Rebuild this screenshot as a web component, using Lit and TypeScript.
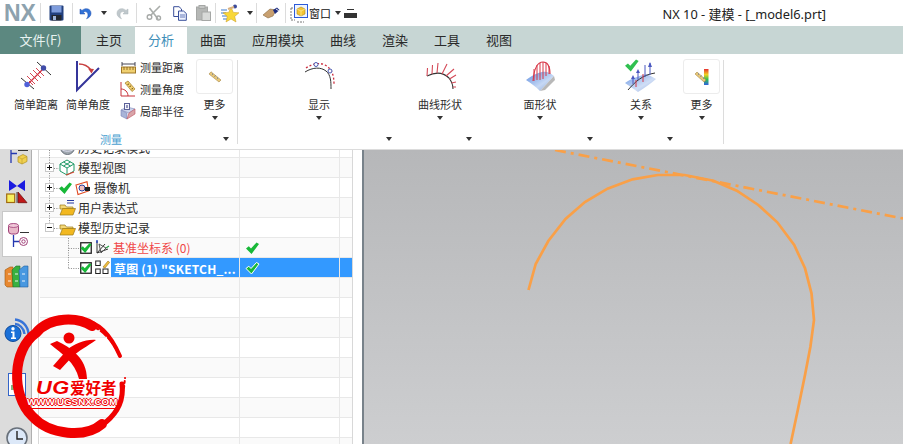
import { LitElement, html, css, svg, nothing } from "lit";
import { customElement } from "lit/decorators.js";

const ico = (w: number, h: number, body: unknown, vb?: string) => html`<svg width=${w} height=${h} viewBox=${vb ?? `0 0 ${w} ${h}`}>${body}</svg>`;

const checkShape = (fill: string, halo = false) => svg`
  <path d="M0 6.5 L2.8 4.2 L5 6.5 L10.5 0.5 L13 2 L5.5 12 Z" fill=${fill} stroke=${halo ? "#fff" : "none"} stroke-width=${halo ? 1 : 0}/>`;

const save = ico(15, 16, svg`
  <rect x=".5" y=".5" width="14" height="15" rx="1" fill="#22407e"/>
  <rect x="2.5" y="1" width="10" height="6.5" fill="#7e9cdc"/>
  <rect x="2.5" y="10" width="10" height="5.5" fill="#23272e"/>
  <rect x="4" y="11" width="3" height="4" fill="#9fb4d8"/>`);
const undo = (c: string, c2: string) => ico(14, 14, svg`
  <path d="M2 3 L2 8 L7 8 L5.3 6.2 C7.5 4.8 10 6 10 9 C10 10.5 9.5 11.6 8.5 12.8 C11.5 11.6 13 9.6 13 7.2 C13 3 8 1 4 4.4 Z" fill=${c} stroke=${c2} stroke-width=".5"/>`);
const redo = (c: string) => html`<span class="flip">${undo(c, "#aab4b8")}</span>`;
const cut = ico(15, 16, svg`
  <path d="M14 1 L5 10 M12 14 L3.5 3" stroke="#a9adaa" stroke-width="1.6" fill="none"/>
  <circle cx="3.5" cy="12" r="2.3" fill="none" stroke="#a7aaa8" stroke-width="1.4"/>
  <circle cx="12.5" cy="13" r="2" fill="none" stroke="#a7aaa8" stroke-width="1.4"/>`);
const copy = ico(14, 15, svg`
  <path d="M.7.7 H6 L8.5 3 V10.5 H.7 Z" fill="#fff" stroke="#3a4f9a"/>
  <path d="M5.5 5 H10.5 L13.3 7.5 V14.3 H5.5 Z" fill="#eef3ff" stroke="#3a4f9a"/>
  <path d="M7 9 H12 M7 11 H12" stroke="#6478b8"/>`);
const paste = ico(15, 16, svg`
  <rect x=".5" y="2" width="11" height="13" fill="#b5b7b5" stroke="#a5a7a5"/>
  <rect x="3" y=".5" width="6" height="3" fill="#c4c6c4" stroke="#a5a7a5"/>
  <rect x="6" y="7" width="8.5" height="8.5" fill="#d8dad8" stroke="#a5a7a5"/>`);
const star = ico(18, 18, svg`
  <path d="M0 6 H6 M0 9 H5 M1 12 H6 M2 15 H6" stroke="#3a7ad0" stroke-width="1.2"/>
  <path d="M10 3 L12.3 8.4 L18 8.8 L13.7 12.4 L15 18 L10 15 L5 18 L6.3 12.4 L2 8.8 L7.7 8.4 Z" fill="#f8d738" stroke="#c89a20" stroke-width=".5"/>
  <circle cx="14" cy="2.5" r="2" fill="#3b4a9a"/>
  <path d="M7 5 L13 3" stroke="#d8b080" stroke-width="2"/>`);
const eraser = ico(18, 12, svg`
  <path d="M1 8 L8 2 L14 3 L11 9 L6 11 Z" fill="#c8a070" stroke="#8a6a40" stroke-width=".6"/>
  <path d="M11 3 L15 0.5 L17.5 3 L13 7 Z" fill="#1f2f80"/>
  <path d="M14 2 L17 4" stroke="#e8e8f0"/>`);
const windowIcon = ico(18, 19, svg`
  <path d="M1 4 H4 M1 4 V16 H5 M7 18 H14" stroke="#777" stroke-dasharray="2 1" fill="none"/>
  <rect x="4.5" y=".5" width="13" height="13" fill="#eef4ff" stroke="#2b5ad8"/>
  <path d="M7 5 L11 3 L15 5 V10 L11 12 L7 10 Z" fill="#f4c430" stroke="#b08a18" stroke-width=".6"/>
  <path d="M7 5 L11 7 L15 5 M11 7 V12" stroke="#fff3b0" stroke-width=".6" fill="none"/>`);
const caret = html`<span class="caret"></span>`;
const moreMenu = html`<span class="menu-lines"><span></span>${caret}</span>`;

const simpleDist = ico(34, 32, svg`
  <path d="M2 18 L15 29 M18 2 L32 15" stroke="#333" stroke-width="1" fill="none"/>
  <path d="M8 25 L24 9" stroke="#d23040" stroke-width="1.2"/>
  <path d="M8 16 L16 24 M11 13 L19 21 M14 10 L22 18 M17 8 L25 16 M10 21 L14 25" stroke="#d23040" stroke-width=".9"/>
  <circle cx="8" cy="24.5" r="2.7" fill="#5060d8"/><circle cx="24.5" cy="8" r="2.7" fill="#404ca8"/>`);
const simpleAngle = ico(26, 32, svg`
  <path d="M2 1 V30 L24 8" fill="none" stroke="#35359a" stroke-width="2"/>
  <path d="M4 4 C9 4 13 6 16 10" fill="none" stroke="#c84040" stroke-width="1.3"/>
  <path d="M13 8.5 L19 9 L16.5 13.5 Z" fill="#c84040"/>`);
const measDist = ico(15, 13, svg`
  <path d="M1 1 V5 M14 1 V5 M1 3 H14" stroke="#334" stroke-width=".9"/>
  <rect x=".5" y="6" width="14" height="6" fill="#f0d070" stroke="#a07828"/>
  <path d="M3 6 V9 M6 6 V9 M9 6 V9 M12 6 V9" stroke="#805818" stroke-width=".8"/>`);
const measAngle = ico(16, 16, svg`
  <path d="M1 1 V15 H15 M1 8 C5 8 8 11 8 15" fill="none" stroke="#c83038" stroke-width="1"/>
  <path d="M5 2 L8 0 L15 8 L12 10.5 Z" fill="#f0d070" stroke="#a07828" stroke-width=".7"/>
  <path d="M7.5 3.5 L9 3 M9.5 5.5 L11 5 M11.5 8 L13 7.5" stroke="#705018"/>`);
const radius = ico(16, 17, svg`
  <path d="M1 7 L7 4 L15 6 L9 10 Z" fill="#ccd4ec" stroke="#7a84b8" stroke-width=".6"/>
  <path d="M1 7 V13 L7 16 V10 Z" fill="#a8b4d8" stroke="#7a84b8" stroke-width=".6"/>
  <path d="M7 16 L9 10 L15 6 V11 Z" fill="#d8a4a8" stroke="#c05060" stroke-width=".6"/>
  <rect x="4.5" y=".5" width="5" height="6" fill="#f4f4fa" stroke="#5a6098"/>
  <path d="M7 2 V5" stroke="#303880"/>`);
const rulerSm = ico(14, 12, svg`
  <path d="M1 3 L3 .8 L13 9 L11 11 Z" fill="#e8c878" stroke="#a88848" stroke-width=".6"/>
  <path d="M4 3.5 L5 2.7 M6.5 5.5 L7.5 4.7 M9 7.5 L10 6.7" stroke="#5a70a0"/>`);
const rulerRain = ico(14, 16, svg`
  <defs><linearGradient id="rb" x1="0" y1="0" x2="0" y2="1"><stop offset="0" stop-color="#e83030"/><stop offset=".35" stop-color="#f0d020"/><stop offset=".65" stop-color="#30c050"/><stop offset="1" stop-color="#3060e0"/></linearGradient></defs>
  <rect x="9" y="0" width="4.5" height="16" fill="url(#rb)"/>
  <path d="M0 5 L2 3 L11 11 L9 13 Z" fill="#e8c878" stroke="#a88848" stroke-width=".6"/>
  <path d="M3 5.5 L4 4.7 M5.5 7.5 L6.5 6.7 M8 9.5 L9 8.7" stroke="#5a70a0"/>`);
const display = ico(32, 28, svg`
  <path d="M2 10 C10 5 18 5 23 9 C28 13 28 20 28 27" fill="none" stroke="#333" stroke-width="1"/>
  <path d="M3 6 C9 2 16 0 22 3 C28 6 31 12 31 22" fill="none" stroke="#cc3040" stroke-width="1.3" stroke-dasharray="2 2"/>
  <circle cx="13" cy="2.5" r="2" fill="#fff" stroke="#4a58b0"/>
  <circle cx="27" cy="9" r="2" fill="#fff" stroke="#4a58b0"/>`);
const curveShape = ico(30, 28, svg`
  <path d="M2 14 C10 10 18 10 24 16 C27 20 28 23 28 27" fill="none" stroke="#333" stroke-width="1.1"/>
  <path d="M2 14 L2.5 6 M7 12 L7.5 3 M12 11 L13 1 M17 12 L22 2 M21 14 L29 7 M24.5 17 L31 13 M26.5 21 L31 20 M28 25 L31 25" stroke="#d44a58" stroke-width="1.1"/>`);
const surfaceShape = ico(30, 30, svg`
  <defs><linearGradient id="sf" x1="0" y1="0" x2="1" y2="1"><stop offset="0" stop-color="#5e8ee0"/><stop offset=".6" stop-color="#c6d8f4"/><stop offset="1" stop-color="#88a4d8"/></linearGradient></defs>
  <path d="M1 19 C8 14 12 12 17 11 C22 10 25 12 29 15 L15 30 C11 26 6 22 1 19 Z" fill="url(#sf)"/>
  <path d="M15 30 L29 15 L30 19 L20 29 Z" fill="#b8b8b8"/>
  <path d="M8 20 C9 8 12 1 18 1 C24 1 25 7 25 13" fill="none" stroke="#d83848" stroke-width="1.1"/>
  <path d="M9 8 V20 M12 4 V19 M15 2 V19 M18 1 V18 M21 2 V15 M24 5 V13" stroke="#d83848" stroke-width="1"/>`);
const relation = ico(32, 32, svg`
  <defs><linearGradient id="sr" x1="0" y1="0" x2="1" y2="1"><stop offset="0" stop-color="#6e9ae4"/><stop offset=".6" stop-color="#d0def6"/><stop offset="1" stop-color="#90aadd"/></linearGradient></defs>
  <path d="M0 23 C7 18 14 16 22 14 L31 19 C26 23 20 28 13 32 Z" fill="url(#sr)"/>
  <path d="M3 30 C10 22 17 15 30 13" fill="none" stroke="#333" stroke-width="1"/>
  <path d="M8 24 V17 M13 20 V11 M20 17 V5 M25 15 V3" stroke="#4a58c0" stroke-width="1"/>
  <path d="M6 19 L8 15 L10 19 Z M11 13 L13 9 L15 13 Z M23 7 L25 2 L27 7 Z" fill="#4a58c0"/>
  <path d="M11 27 V20 M18 22 V14" stroke="#d83848" stroke-width="1"/>
  <g transform="translate(0,-1) scale(1.05)">${checkShape("#30c050")}</g>`);

const dbIcon = ico(24, 26, svg`
  <rect x="2.5" y="1" width="10" height="10" rx="3" fill="#e8b8c8" stroke="#a04078"/>
  <ellipse cx="7.5" cy="2.5" rx="5" ry="2" fill="#f0c8d8" stroke="#a04078" stroke-width=".8"/>
  <path d="M14 9.5 H23" stroke="#333"/>
  <path d="M7.5 12 V24 M7.5 18.5 H13" stroke="#2438b0" stroke-width="1.3"/>
  <circle cx="17.5" cy="18.5" r="4" fill="#fff" stroke="#a04078"/>
  <circle cx="17.5" cy="18.5" r="1.7" fill="none" stroke="#a04078"/>`);
const tabTop = ico(24, 16, svg`
  <path d="M6 0 V13 M6 3.5 H12" stroke="#2438b0" stroke-width="1.3"/>
  <path d="M13 .5 H23" stroke="#333"/>
  <path d="M13 7 L18 4.5 L22 6.5 V11.5 L17 14 L13 12 Z" fill="#f0d050" stroke="#b09020" stroke-width=".7"/>
  <path d="M13 7 L17 9 L22 6.5 M17 9 V14" stroke="#b09020" stroke-width=".5" fill="none"/>`);
const constraints = ico(22, 24, svg`
  <path d="M3 0 L11 6 L19 0 V11 L11 6 L3 11 Z" fill="#1a1ae0"/>
  <rect x=".7" y="14" width="8" height="8.5" fill="#f8f060" stroke="#a06a10" stroke-width="1.2"/>
  <path d="M12 12 L21 22.7 H12 Z" fill="#c01818" stroke="#701010" stroke-width=".8"/>
  <path d="M11 12 V23" stroke="#444"/>`);
const books = ico(24, 23, svg`
  <path d="M0 5 L5 2 H8 V22 H2 L0 20 Z" fill="#e88830" stroke="#a05a10" stroke-width=".6"/>
  <path d="M7 5 L11 1 H15 V22 H8 Z" fill="#38b040" stroke="#207028" stroke-width=".6"/>
  <path d="M14 5 L19 1 H23 V22 H15 Z" fill="#4898e0" stroke="#2060a0" stroke-width=".6"/>
  <path d="M3 9 H6 M3 16 H6 M10 9 H13 M10 16 H13 M17 9 H20 M17 16 H20" stroke="#fff" stroke-width=".9"/>`);
const info = ico(26, 25, svg`
  <path d="M11 1.5 C18 2 24 8 24.5 16 M11 6 C15 6 20 10 20.5 16" stroke="#3874d8" stroke-width="2.4" fill="none"/>
  <circle cx="9" cy="15.5" r="8" fill="#1a70d8" stroke="#104a9a"/>
  <circle cx="9" cy="10.8" r="1.7" fill="#fff"/>
  <path d="M7 13.5 H10.5 V19.5 H12 V21 H7 V19.5 H8.5 V15 H7 Z" fill="#fff"/>`);
const blueBox = ico(18, 23, svg`
  <rect x=".5" y=".5" width="17" height="22" fill="#fff" stroke="#3464c8"/>
  <path d="M3 17 V12 H6 V17 Z" fill="#80b880"/>`);
const clock = ico(22, 22, svg`
  <circle cx="11" cy="11" r="10" fill="#dce8f8" stroke="#68707a" stroke-width="1.6"/>
  <path d="M11 4 V12 H17" fill="none" stroke="#222" stroke-width="1.4"/>`);

const tree3d = ico(16, 17, svg`
  <path d="M8 1 L15 5 V12 L8 16 L1 12 V5 Z M1 5 L8 9 L15 5 M8 9 V16 M4.5 3 L11.5 7 M11.5 3 L4.5 7" fill="#fff" stroke="#1f9a68" stroke-width="1"/>
  <path d="M7 16 L15 13" stroke="#d84030" stroke-width="1.2"/>`);
const camera = ico(15, 14, svg`
  <path d="M1 4 L12 .8 L13.5 10 L3 13.5 Z" fill="#fff" stroke="#e04820" stroke-width="1.1"/>
  <circle cx="7" cy="7" r="3" fill="#f0c0c0" stroke="#2a40a0"/>
  <rect x="10" y="6" width="5" height="4" fill="#222"/>`);
const folder = (withLines: boolean) => ico(17, 17, svg`
  ${withLines ? svg`<path d="M8 1.5 H15 M8 4 H15" stroke="#2438a0" stroke-width="1"/>` : nothing}
  <path d="M1 6 H6 L7.5 8 H14 V10 H1 Z" fill="#f4d878" stroke="#9a7818" stroke-width=".7"/>
  <path d="M1 16 L3.5 9.5 H16.5 L14 16 Z" fill="#f2b820" stroke="#9a7818" stroke-width=".7"/>`);
const globe = ico(15, 15, svg`<circle cx="7.5" cy="7.5" r="7" fill="#a0a8b0" stroke="#68707a"/><path d="M1 9 C5 12 10 12 14 9" stroke="#dde" fill="none"/>`);
const datum = ico(15, 15, svg`
  <path d="M2 1 V13 L13 9 M2 13 L10 4" fill="none" stroke="#333" stroke-width="1"/>
  <path d="M4 4 L11 8 L6 13 Z" fill="none" stroke="#555"/>
  <path d="M11 8 L14 6" stroke="#20a040" stroke-width="1.2"/>
  <path d="M2 0 V3" stroke="#2040c0" stroke-width="1.4"/>`);
const sketch = ico(15, 15, svg`
  <rect x=".7" y="1" width="4.5" height="4.5" fill="#fff" stroke="#222"/>
  <rect x=".7" y="9" width="4.5" height="4.5" fill="#fff" stroke="#222"/>
  <rect x="8" y="9" width="5" height="4.5" fill="#fff" stroke="#222"/>
  <path d="M8 7 L13 1 L14.6 2.4 L10 8 Z" fill="#f0c040" stroke="#a07010" stroke-width=".6"/>`);

const expander = (open: boolean) => ico(9, 9, svg`
  <rect x=".5" y=".5" width="8" height="8" fill="#fff" stroke="#c8c8c8"/>
  <path d="M2 4.5 H7" stroke="#111"/>
  ${open ? nothing : svg`<path d="M4.5 2 V7" stroke="#111"/>`}`);
const box = ico(12, 12, svg`<rect x=".75" y=".75" width="10.5" height="10.5" fill="#fff" stroke="#222" stroke-width="1.3"/>
  <g transform="translate(.5,.8) scale(.85)">${checkShape("#18b838")}</g>`);

interface Row { kind?: string; text?: string; cls?: string; }
const rows: Row[] = [
  { kind: "hist", text: "历史记录模式" },
  { kind: "view", text: "模型视图" },
  { kind: "cam", text: "摄像机" },
  { kind: "expr", text: "用户表达式" },
  { kind: "model", text: "模型历史记录" },
  { kind: "datum", text: "基准坐标系 (0)" },
  { kind: "sketch", text: '草图 (1) "SKETCH_...' },
  ...Array.from({ length: 9 }, () => ({})),
];

const curve = "528.5,290 535.7,264 548.3,241 565.5,219 584.9,202 607.5,188.7 632.6,179.3 657.8,175 684.7,175 713.4,180.7 736.8,190.7 758.3,205 777.3,222.3 794.2,245 805,268.3 811.5,293.3 814,320 810.4,346.7 805,375 797.8,410 790.6,444";

const tools: { w: number; body: unknown; sep?: boolean }[] = [
  { w: 32, body: save, sep: true },
  { w: 24, body: undo("#2f72d8", "#1c4aa8") },
  { w: 13, body: caret },
  { w: 27, body: redo("#c0c8cc"), sep: true },
  { w: 32, body: cut },
  { w: 22, body: copy },
  { w: 25, body: paste, sep: true },
  { w: 28, body: star },
  { w: 13, body: caret, sep: true },
  { w: 29, body: eraser, sep: true },
  { w: 26, body: windowIcon },
];
const tabs = ["主页", "分析", "曲面", "应用模块", "曲线", "渲染", "工具", "视图"];
const strip: { h: number; pt: number; body: unknown; on?: boolean }[] = [
  { h: 24, pt: 0, body: tabTop },
  { h: 37, pt: 6, body: constraints },
  { h: 46, pt: 11, body: dbIcon, on: true },
  { h: 43, pt: 8, body: books },
  { h: 58, pt: 18, body: info },
  { h: 57, pt: 15, body: blueBox },
  { h: 29, pt: 12, body: clock },
];

@customElement("app-root")
export class AppRoot extends LitElement {
  static styles = css`
    :host { display: block; width: 903px; height: 444px; overflow: hidden; position: relative; background: #fff;
      font-family: "Noto Sans CJK SC", "Noto Sans", sans-serif; color: #2c2c2c; font-size: 12px; }
    svg { display: block; flex: none; overflow: visible; }
    .title { height: 26px; display: flex; align-items: center; }
    .nx { width: 41px; box-sizing: border-box; padding-left: 4px; font: bold 23px/20px "Liberation Sans", sans-serif; color: #8da2ae; border-right: 1px solid #dcdcdc; height: 20px; flex: none; }
    .tool { display: flex; align-items: center; justify-content: center; height: 20px; flex: none; box-sizing: border-box; }
    .tool.sep { border-right: 1px solid #dcdcdc; }
    .flip { transform: scaleX(-1); display: block; }
    .caret { display: block; width: 0; height: 0; border: 3.5px solid transparent; border-top: 4px solid #333; border-bottom: 0; flex: none; }
    .win { font-size: 11px; margin-left: -3px; margin-right: 4px; color: #111; flex: none; }
    .menu-lines { display: flex; flex-direction: column; gap: 3px; align-items: center; margin-left: 3px; flex: none; }
    .menu-lines span { display: block; width: 7px; height: 1px; background: #333; }
    .apptitle { margin-left: auto; padding-right: 77px; font: 12.8px "Noto Sans", "Noto Sans CJK SC", sans-serif; color: #222; white-space: nowrap; }
    .apptitle span { font-family: "Noto Sans CJK SC", sans-serif; font-size: 13px; }

    .tabs { height: 28px; background: #c7d6d4; display: flex; font-size: 13px; line-height: 27px; }
    .file { width: 81px; margin-right: 2px; background: #5c8880; color: #e8f2f0; text-align: center; }
    .tab { padding: 0 13px; color: #2a2a2a; }
    .tab.on { background: #fff; color: #3f8fb8; border-top: 1px solid #c8c8c8; line-height: 26px; }

    .ribbon { height: 96px; box-sizing: border-box; border-bottom: 1px solid #dcdcdc; display: flex; }
    .group { display: flex; flex-direction: column; position: relative; }
    .g1 { width: 237px; box-sizing: border-box; }
    .g2 { width: 485px; box-sizing: border-box; }
    .sepline { width: 1px; height: 84px; background: #dcdcdc; margin-top: 6px; flex: none; }
    .grow { display: flex; height: 74px; padding-top: 5px; box-sizing: border-box; }
    .big { display: flex; flex-direction: column; align-items: center; flex: none; }
    .b52 { width: 52px; } .b80 { width: 80px; } .b37 { width: 37px; }
    .icoarea { height: 33px; margin-bottom: 2px; display: flex; align-items: center; justify-content: center; }
    .lbl { line-height: 16px; height: 16px; white-space: nowrap; font-size: 11px; margin-top: 2px; color: #2c2c2c; }
    .arr { margin-top: 4px; }
    .moreb { height: 35px; width: 37px; box-sizing: border-box; border: 1px solid #ececec; border-radius: 3px; display: flex; align-items: center; justify-content: center; }
    .stack { width: 76px; margin-left: 6px; margin-top: -3px; display: flex; flex-direction: column; }
    .small { height: 22px; display: flex; align-items: center; gap: 4px; white-space: nowrap; font-size: 11px; }
    .small .i { width: 16px; display: flex; justify-content: center; }
    .g1foot { height: 21px; display: flex; align-items: center; padding-left: 100px; padding-right: 8px; color: #4a9fd0; font-size: 11px; justify-content: space-between; }
    .g2foot { height: 21px; display: grid; grid-template-columns: 154px 80px 121px 80px; align-items: center; }
    .g2foot .caret { justify-self: end; }
    .m41 { margin-left: 41px; } .m20 { margin-left: 20px; } .m21 { margin-left: 21px; } .m2 { margin-left: 2px; }
    .pad10 { width: 10px; flex: none; }

    .body { height: 294px; display: flex; }
    .strip { width: 32px; flex: none; background: #dcdcdc; border-right: 1px solid #b0b0b0; box-sizing: border-box; }
    .slot { box-sizing: border-box; display: flex; justify-content: center; overflow: hidden; padding-left: 2px; }
    .slot.on { background: #fff; margin-left: 2px; margin-right: -1px; padding-left: 0; border: 1px solid #c8c8c8; border-right: 0; }
    .gutter { width: 6px; flex: none; border-right: 1px solid #d8d8d8; }
    .tree { width: 313px; flex: none; padding-left: 1px; box-sizing: border-box; position: relative; overflow: hidden; }
    .rows { margin-top: -12px; }
    .row { height: 20px; box-sizing: border-box; border-bottom: 1px solid #e8e8e8; display: grid; grid-template-columns: 200px 100px 12px; }
    .row:nth-child(odd) { background: #fff; }
    .row:nth-child(even) { background: #fafafa; }
    .c1 { border-right: 1px solid #e8e8e8; display: flex; align-items: center; padding-left: 5px; overflow: hidden; white-space: nowrap; }
    .c2 { border-right: 1px solid #e8e8e8; display: flex; align-items: center; padding-left: 6px; }
    .gap5 { margin-left: 5px; } .gap2 { margin-left: 2px; } .gap3 { margin-left: 3px; } .gap4 { margin-left: 4px; } .gap15 { margin-left: 15px; }
    .child { padding-left: 40px; }
    .red { color: #f04848; }
    .hl { background: #3399ff; color: #fff; font-weight: 700; align-self: stretch; flex: 1; display: flex; align-items: center; padding-left: 3px; margin-left: 1px; letter-spacing: .2px; height: 20px; }
    .hlc { background: #3399ff; }
    .lines { position: absolute; left: 0; top: 0; pointer-events: none; }
    .right { width: 10px; flex: none; border-left: 1px solid #d8d8d8; box-sizing: border-box; background: #fff; }
    .view { flex: 1; border-left: 2px solid #78828a; background: linear-gradient(#b6b7b9, #cdced0); overflow: hidden; }

    .logo { position: absolute; left: 9px; top: 314px; width: 122px; height: 124px; pointer-events: none; }
    .ug { position: absolute; left: 27px; top: 62px; color: #f00000; display: flex; align-items: baseline; line-height: 20px; white-space: nowrap; }
    .ug b { font: italic bold 19px "Liberation Sans", sans-serif; letter-spacing: 0.5px; margin-right: 2px; transform: scaleX(1.15); transform-origin: left; width: 32px; display: block; }
    .ug i { font: bold 15.5px "Noto Sans CJK SC", sans-serif; }
    .www { position: absolute; left: 18px; top: 82px; font: bold 9.8px/12px "Liberation Sans", sans-serif; color: #fff; white-space: nowrap; border-bottom: 1px solid #f00000;
      text-shadow: 1px 0 #f00000, -1px 0 #f00000, 0 1px #f00000, 0 -1px #f00000; }
  `;

  private rowContent(r: Row) {
    switch (r.kind) {
      case "hist": return html`<span class="c1"><span class="gap15"></span>${globe}<span class="gap3">${r.text}</span></span>`;
      case "view": return html`<span class="c1">${expander(false)}<span class="gap5"></span>${tree3d}<span class="gap3">${r.text}</span></span>`;
      case "cam": return html`<span class="c1">${expander(false)}<span class="gap5"></span>${ico(13, 12, checkShape("#18b838"))}<span class="gap3"></span>${camera}<span class="gap4">${r.text}</span></span>`;
      case "expr": return html`<span class="c1">${expander(false)}<span class="gap5"></span>${folder(true)}<span class="gap2">${r.text}</span></span>`;
      case "model": return html`<span class="c1">${expander(true)}<span class="gap5"></span>${folder(false)}<span class="gap2">${r.text}</span></span>`;
      case "datum": return html`<span class="c1 child">${box}<span class="gap3"></span>${datum}<span class="gap3 red">${r.text}</span></span>`;
      case "sketch": return html`<span class="c1 child">${box}<span class="gap3"></span>${sketch}<span class="hl">${r.text}</span></span>`;
      default: return html`<span class="c1"></span>`;
    }
  }

  render() {
    return html`
      <div class="title">
        <div class="nx">NX</div>
        ${tools.map((t) => html`<div class="tool ${t.sep ? "sep" : ""}" style="width:${t.w}px">${t.body}</div>`)}
        <span class="win">窗口</span>${caret}${moreMenu}
        <div class="apptitle">NX 10 - <span>建模</span> - [_model6.prt]</div>
      </div>
      <div class="tabs">
        <div class="file">文件(F)</div>
        ${tabs.map((t) => html`<div class="tab ${t === "分析" ? "on" : ""}">${t}</div>`)}
      </div>
      <div class="ribbon">
        <div class="group g1">
          <div class="grow">
            <div class="pad10"></div>
            <div class="big b52"><div class="icoarea">${simpleDist}</div><div class="lbl">简单距离</div></div>
            <div class="big b52"><div class="icoarea">${simpleAngle}</div><div class="lbl">简单角度</div></div>
            <div class="stack">
              <div class="small"><span class="i">${measDist}</span>测量距离</div>
              <div class="small"><span class="i">${measAngle}</span>测量角度</div>
              <div class="small"><span class="i">${radius}</span>局部半径</div>
            </div>
            <div class="big b37"><div class="moreb">${rulerSm}</div><div class="lbl">更多</div><div class="arr">${caret}</div></div>
          </div>
          <div class="g1foot"><span>测量</span>${caret}</div>
        </div>
        <div class="sepline"></div>
        <div class="group g2">
          <div class="grow">
            <div class="big b80 m41"><div class="icoarea">${display}</div><div class="lbl">显示</div><div class="arr">${caret}</div></div>
            <div class="big b80 m41"><div class="icoarea">${curveShape}</div><div class="lbl">曲线形状</div><div class="arr">${caret}</div></div>
            <div class="big b80 m20"><div class="icoarea">${surfaceShape}</div><div class="lbl">面形状</div><div class="arr">${caret}</div></div>
            <div class="big b80 m21"><div class="icoarea">${relation}</div><div class="lbl">关系</div><div class="arr">${caret}</div></div>
            <div class="big b37 m2"><div class="moreb">${rulerRain}</div><div class="lbl">更多</div><div class="arr">${caret}</div></div>
          </div>
          <div class="g2foot">${caret}${caret}${caret}${caret}</div>
        </div>
        <div class="sepline"></div>
      </div>
      <div class="body">
        <div class="strip">
          ${strip.map((s) => html`<div class="slot ${s.on ? "on" : ""}" style="height:${s.h}px;padding-top:${s.pt}px">${s.body}</div>`)}
        </div>
        <div class="gutter"></div>
        <div class="tree">
          <div class="rows">
            ${rows.map((r) => html`<div class="row">
              ${this.rowContent(r)}
              <span class="c2 ${r.kind === "sketch" ? "hlc" : ""}">${r.kind === "datum" ? ico(13, 12, checkShape("#18b838")) : r.kind === "sketch" ? ico(13, 12, checkShape("#18b838", true)) : nothing}</span>
              <span class=${r.kind === "sketch" ? "hlc" : ""}></span>
            </div>`)}
          </div>
          <svg class="lines" width="313" height="130">
            <g fill="none" stroke="#8a8a8a" stroke-dasharray="1 1.4" transform="translate(-39,-150)">
              <path d="M49.5 150 V163 M49.5 173 V183 M49.5 193 V203 M49.5 213 V223 M54 168.5 H59 M54 188.5 H60 M54 208.5 H59 M54 228.5 H59"/>
              <path d="M68.5 238 V268.5 M68.5 248.5 H79 M68.5 268.5 H79"/>
            </g>
          </svg>
        </div>
        <div class="right"></div>
        <div class="view">
          <svg width="539" height="294" viewBox="364 150 539 294">
            <polyline points=${curve} fill="none" stroke="#f9a048" stroke-width="2.7"/>
            <line x1="555" y1="150" x2="903" y2="218.5" stroke="#f9a048" stroke-width="2.7" stroke-dasharray="11 5 3 5"/>
          </svg>
        </div>
      </div>
      <div class="logo">
        <svg width="122" height="124" viewBox="9 314 122 124">
          <g fill="none" stroke="#f00000" stroke-linecap="round">
            <path d="M92 326 C78 317 50 316 36 333 C12 350 11 395 32 416 C50 436 86 438 102 424" stroke-width="10"/>
            <path d="M84 321 C100 322 112 338 120 356" stroke-width="4"/>
            <path d="M92 326 C104 331 112 342 118 352" stroke-width="2" stroke-dasharray="7 3"/>
            <path d="M122 384 C124 400 118 412 106 422" stroke-width="5"/>
            <path d="M124 388 L125 378" stroke-width="2" stroke-dasharray="2 3"/>
            <path d="M60 432 C75 435 90 433 100 428" stroke-width="4" stroke-dasharray="14 2"/>
          </g>
          <circle cx="69" cy="338" r="5.5" fill="#f00000"/>
          <path d="M50 344 L57 341 C70 347 87 358 87 379 L79 379 C75 362 62 354 50 344 Z" fill="#f00000"/>
          <path d="M96 340 C86 339 74 344 67 350 L53 366 L60 370 L72 357 C78 351 88 346 96 340 Z" fill="#f00000"/>
        </svg>
        <div class="ug"><b>UG</b><i>爱好者</i></div>
        <div class="www">WWW.UGSNX.COM</div>
      </div>
    `;
  }
}
